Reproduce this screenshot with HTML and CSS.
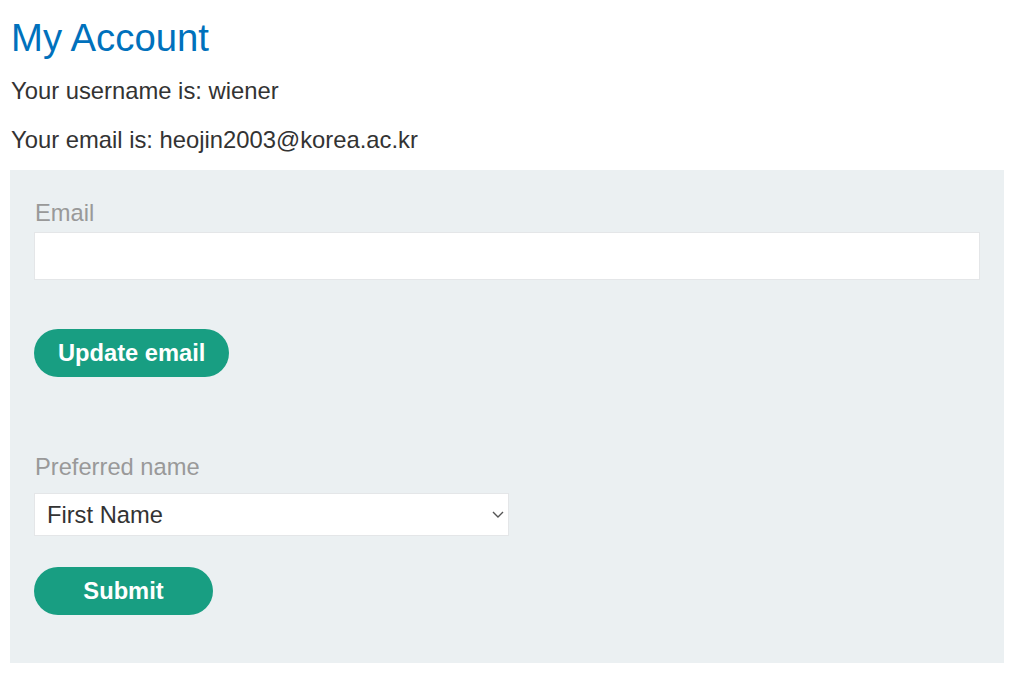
FILE: index.html
```html
<!DOCTYPE html>
<html lang="en">
<head>
<meta charset="utf-8">
<title>My Account</title>
<link rel="stylesheet" href="styles.css">
</head>
<body>
<div class="page">
  <h1 class="title">My Account</h1>
  <p class="info info-first">Your username is: wiener</p>
  <p class="info info-second">Your email is: heojin2003@korea.ac.kr</p>
  <div class="panel">
    <form class="form form-email">
      <label class="label" for="email">Email</label>
      <input class="input" id="email" type="email" name="email">
      <button class="btn" type="button">Update email</button>
    </form>
    <form class="form form-name">
      <label class="label label-name" for="pref">Preferred name</label>
      <div class="select-wrap">
        <select class="select" id="pref" name="pref">
          <option>First Name</option>
          <option>Last Name</option>
        </select>
        <svg class="chevron" width="12" height="7" viewBox="0 0 12 7" aria-hidden="true">
          <path d="M1 1 L6 6 L11 1" fill="none" stroke="#555" stroke-width="1.4"/>
        </svg>
      </div>
      <button class="btn btn-wide" type="button">Submit</button>
    </form>
  </div>
</div>
</body>
</html>
```

FILE: styles.css
```css
html, body {
  margin: 0;
  padding: 0;
  background: #ffffff;
}

body {
  font-family: "Liberation Sans", Arial, Helvetica, sans-serif;
  color: #333333;
  font-size: 23.6px;
}

.page {
  padding: 0 20px 0 10px;
  display: flex;
  flex-direction: column;
}

.title {
  margin: 16px 0 0 0;
  padding-left: 1px;
  font-size: 38.3px;
  line-height: 44px;
  font-weight: normal;
  color: #0071bc;
}

.info {
  margin: 0;
  padding-left: 1px;
  line-height: 28px;
  font-size: 23.8px;
}

.info-first {
  margin-top: 17px;
}

.info-second {
  margin-top: 21px;
}

.panel {
  margin-top: 16px;
  background: #ebf0f2;
  padding: 29px 24px 48px 24px;
  display: flex;
  flex-direction: column;
}

.form {
  display: flex;
  flex-direction: column;
  align-items: flex-start;
}

.form-name {
  margin-top: 76px;
}

.label {
  color: #999999;
  line-height: 28px;
  font-size: 23.7px;
  padding-left: 1px;
}

.input {
  margin-top: 5px;
  width: 100%;
  height: 48px;
  box-sizing: border-box;
  border: 1px solid #e4e6e8;
  background: #ffffff;
  font: inherit;
  padding: 0 12px;
  outline: none;
}

.btn {
  margin-top: 49px;
  height: 48px;
  padding: 0 24px;
  border: none;
  border-radius: 24px;
  background: #189e82;
  color: #ffffff;
  font-family: "Liberation Sans", Arial, Helvetica, sans-serif;
  font-size: 23.7px;
  font-weight: bold;
  cursor: pointer;
  box-sizing: border-box;
}

.btn-wide {
  margin-top: 31px;
  width: 179px;
  padding: 0;
}

.select-wrap {
  position: relative;
  margin-top: 12px;
  width: 475px;
}

.select {
  display: block;
  width: 100%;
  height: 43px;
  box-sizing: border-box;
  -webkit-appearance: none;
  appearance: none;
  border: 1px solid #e4e6e8;
  border-radius: 0;
  background: #ffffff;
  color: #333333;
  font-family: "Liberation Sans", Arial, Helvetica, sans-serif;
  font-size: 23.7px;
  padding: 0 40px 0 12px;
  outline: none;
}

.chevron {
  position: absolute;
  right: 5px;
  top: 18px;
  pointer-events: none;
}
```
